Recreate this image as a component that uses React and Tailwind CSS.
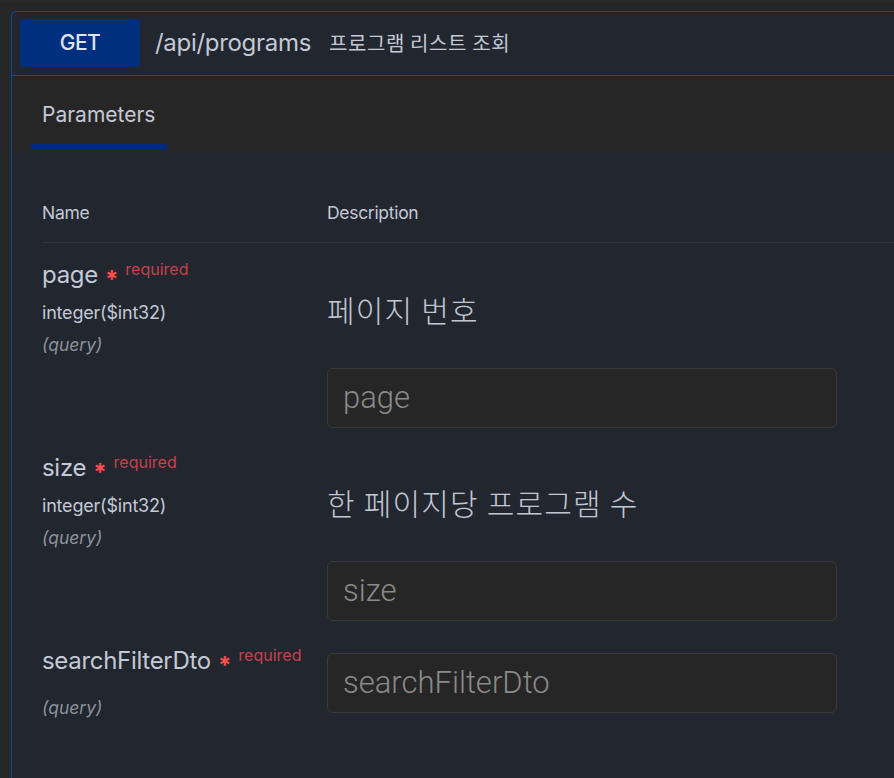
import React from "react";

const font = { fontFamily: '"Inter", "Noto Sans CJK KR", sans-serif' };
const kr = { fontFamily: '"Noto Sans CJK KR", sans-serif' };

function Row({ name, type, desc, placeholder, noType }) {
  return (
    <div className="flex pb-[26px]">
      <div className="w-[285px] shrink-0">
        <div className="flex items-start leading-[28px]">
          <span className="text-[24px] text-[#c3c9d5] tracking-[-0.3px]">{name}</span>
          <span className="ml-[7px] text-[24px] font-bold text-[#ff4d4d] leading-[28px] mt-[5px]">*</span>
          <span className="ml-[7px] text-[16px] text-[#c8404c] leading-[18px] -mt-[1px]">required</span>
        </div>
        {noType ? (
          <div className="h-[12px]" />
        ) : (
          <div className="mt-[3px] leading-[32px] text-[18px] text-[#c3c9d5] tracking-[-0.2px]">{type}</div>
        )}
        <div className="leading-[32px] text-[17.5px] italic text-[#8d929c]">(query)</div>
      </div>
      <div className="flex flex-col">
        {desc ? (
          <div
            className="mt-[28px] h-[40px] leading-[40px] text-[30px] font-light text-[#c2c8d3] mb-[39px] tracking-[1.2px]"
            style={kr}
          >
            {desc}
          </div>
        ) : (
          <div className="h-[6px]" />
        )}
        <div className="w-[510px] h-[60px] rounded-[6px] border border-[#3a3a3a] bg-[#262626] flex items-center pl-[15px]">
          <span className="text-[31px] text-[#8a8a8a]" style={{ fontFamily: "Roboto, sans-serif", fontWeight: 300 }}>
            {placeholder}
          </span>
        </div>
      </div>
    </div>
  );
}

export default function App() {
  return (
    <div className="w-[894px] h-[778px] bg-[#262626] overflow-hidden" style={font}>
      <div className="h-[3px] bg-[#2a2a2a]" />
      <div className="ml-[11px] mt-[8px] h-[800px] w-[900px] border-l border-t border-[#0f4c91] rounded-tl-[5px] bg-[#22262f]">
        {/* header */}
        <div className="flex items-center h-[64px] pl-[8px] pb-[1px] border-b border-[#0f4c91]">
          <div className="w-[120px] h-[48px] rounded-[4px] bg-[#012f80] flex items-center justify-center text-[21px] font-medium text-[#dfe3ea] tracking-[-0.5px]">
            GET
          </div>
          <div className="ml-[15px] text-[24px] text-[#c3c9d5] tracking-[-0.3px]">/api/programs</div>
          <div className="ml-[18px] text-[20px] text-[#c3c9d5] tracking-[0.6px]" style={kr}>
            프로그램 리스트 조회
          </div>
        </div>
        {/* tabs */}
        <div className="h-[76px] bg-[#262626] pl-[19px] flex items-end pb-[2px]">
          <div className="w-[136px] flex flex-col">
            <div className="pl-[11px] text-[21px] text-[#c3c9d5] leading-[28px]">Parameters</div>
            <div className="mt-[15px] h-[6px] bg-[#002b7d]" />
          </div>
        </div>
        {/* body */}
        <div className="pl-[30px] pt-[49px]">
          <div className="flex h-[42px] border-b border-[#2f343e] text-[17.5px] text-[#c3c9d5] leading-[24px] tracking-[-0.3px]">
            <div className="w-[285px]">Name</div>
            <div>Description</div>
          </div>
          <div className="pt-[18px]">
            <Row name="page" type="integer($int32)" desc="페이지 번호" placeholder="page" />
            <Row name="size" type="integer($int32)" desc="한 페이지당 프로그램 수" placeholder="size" />
            <Row name="searchFilterDto" noType placeholder="searchFilterDto" />
          </div>
        </div>
      </div>
    </div>
  );
}
